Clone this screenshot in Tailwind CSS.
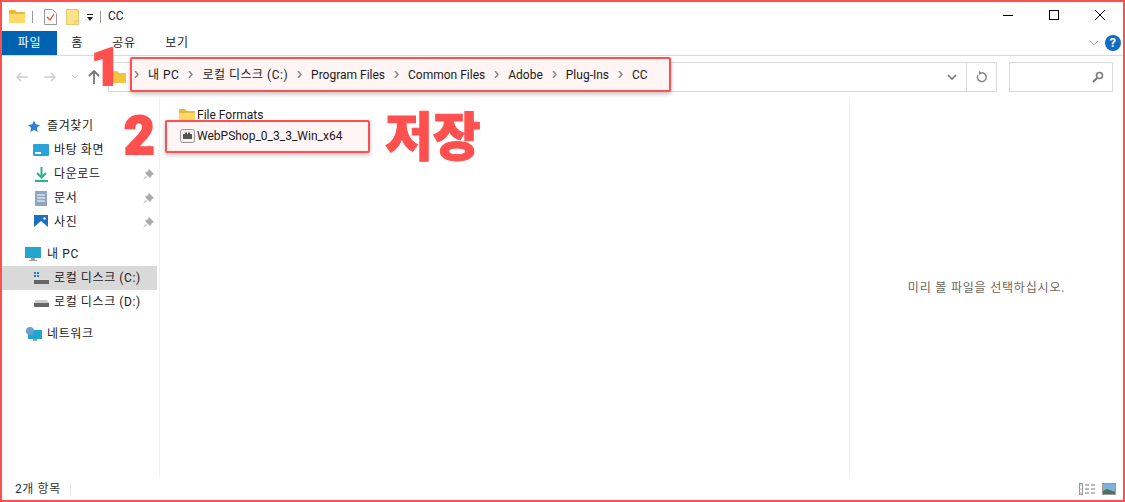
<!DOCTYPE html>
<html lang="ko">
<head>
  <meta charset="UTF-8">
  <title>CC</title>
  <script src="https://cdn.jsdelivr.net/npm/@tailwindcss/browser@4"></script>
</head>
<body class="bg-white">
  <div class="relative w-[1125px] h-[502px] overflow-hidden border-2 border-[#ff5050] flex flex-col bg-white text-[12px] text-[#1a1a1a] font-['Roboto','Noto_Sans_CJK_KR',sans-serif]">

    <!-- title bar -->
    <header class="h-[29px] shrink-0 flex items-center">
      <svg class="ml-[7px] w-[16px] h-[13px]" viewBox="0 0 16 13"><path d="M0 0h6l2 2h8v11H0z" fill="#e9b93f"/><path d="M0 4h16v9H0z" fill="#ffd966"/></svg>
      <div class="ml-[7px] w-px h-[12px] bg-[#999]"></div>
      <svg class="ml-[11px] w-[13px] h-[16px]" viewBox="0 0 13 16"><path d="M.5.5h8l4 4v11H.5z" fill="#fff" stroke="#999"/><path d="M3 8l3 3 4-6" fill="none" stroke="#e0562b" stroke-width="1.3"/></svg>
      <svg class="ml-[9px] w-[13px] h-[16px]" viewBox="0 0 13 16"><path d="M.5.5h12v15H.5z" fill="#ffe28a" stroke="#e3c66b"/><path d="M9 15v-3h3" fill="none" stroke="#e3c66b"/></svg>
      <svg class="ml-[7px] mt-[2px] w-[8px] h-[8px]" viewBox="0 0 8 8"><path d="M1 0h6v1H1zM1 3h6L4 7z" fill="#222"/></svg>
      <div class="ml-[6px] w-px h-[12px] bg-[#999]"></div>
      <span class="ml-[7px] -mt-[2px] text-[12px] text-[#222]">CC</span>
      <div class="ml-auto flex items-center">
        <svg class="w-[46px] h-[29px]" viewBox="0 0 46 29"><path d="M18 13.5h10" stroke="#000"/></svg>
        <svg class="w-[46px] h-[29px]" viewBox="0 0 46 29"><rect x="18.5" y="8.5" width="9" height="9" fill="none" stroke="#000"/></svg>
        <svg class="w-[46px] h-[29px]" viewBox="0 0 46 29"><path d="M18 8l10 10M28 8L18 18" stroke="#000"/></svg>
      </div>
    </header>

    <!-- ribbon tabs -->
    <nav class="h-[24px] shrink-0 flex items-center border-b border-[#dadada] box-content tracking-[0.6px]">
      <div class="w-[55px] h-[24px] flex items-center justify-center bg-[#0063b1] text-white">파일</div>
      <div class="w-[40px] text-center">홈</div>
      <div class="w-[54px] text-center">공유</div>
      <div class="w-[52px] text-center">보기</div>
      <svg class="ml-auto w-[10px] h-[6px]" viewBox="0 0 10 6"><path d="M1 1l4 4 4-4" fill="none" stroke="#aaa"/></svg>
      <div class="ml-[6px] mr-[2px] w-[16px] h-[16px] rounded-full bg-[#0f6cc4] text-white text-[13px] font-bold flex items-center justify-center">?</div>
    </nav>

    <!-- address row -->
    <div class="h-[42px] shrink-0 flex items-center">
      <svg class="ml-[13px] w-[13px] h-[12px]" viewBox="0 0 13 12"><path d="M13 6H2M6 2L2 6l4 4" fill="none" stroke="#d0d0d0" stroke-width="1.5"/></svg>
      <svg class="ml-[16px] w-[13px] h-[12px]" viewBox="0 0 13 12"><path d="M0 6h11M7 2l4 4-4 4" fill="none" stroke="#d0d0d0" stroke-width="1.5"/></svg>
      <svg class="ml-[15px] w-[6px] h-[4px]" viewBox="0 0 6 4"><path d="M0 0l3 3 3-3" fill="none" stroke="#ccc"/></svg>
      <svg class="ml-[10px] w-[12px] h-[14px]" viewBox="0 0 12 14"><path d="M6 14V1M1 6l5-5 5 5" fill="none" stroke="#777" stroke-width="1.8"/></svg>
      <div class="ml-[8px] w-[859px] h-[30px] flex items-center border border-[#d9d9d9]">
        <svg class="ml-[2px] w-[15px] h-[12px]" viewBox="0 0 15 12"><path d="M0 0h6l2 2h7v10H0z" fill="#f3c33f"/></svg>
        <svg class="ml-auto mr-[9px] w-[10px] h-[6px]" viewBox="0 0 10 6"><path d="M1 1l4 4 4-4" fill="none" stroke="#777" stroke-width="1.6"/></svg>
      </div>
      <div class="w-[30px] h-[30px] flex items-center justify-center border border-l-0 border-[#d9d9d9]">
        <svg class="w-[11px] h-[12px]" viewBox="0 0 11 12"><path d="M6 1.8a4.4 4.4 0 1 1-4 2.2" fill="none" stroke="#888" stroke-width="1.5"/><path d="M3 0l4 2-4 2z" fill="#888"/></svg>
      </div>
      <div class="ml-[12px] w-[104px] h-[30px] flex items-center justify-end pr-[8px] border border-[#d9d9d9]">
        <svg class="w-[12px] h-[12px]" viewBox="0 0 12 12"><circle cx="7.5" cy="4.5" r="3" fill="none" stroke="#777" stroke-width="1.5"/><path d="M5 7l-4 4" stroke="#777" stroke-width="2"/></svg>
      </div>
    </div>

    <!-- body -->
    <div class="flex-1 flex min-h-0">
      <aside class="w-[158px] shrink-0 border-r border-[#f0f0f0] pr-[2px] pt-[16px] tracking-[0.6px]">
        <div class="h-[24px] pl-[25px] flex items-center">
          <svg class="w-[14px] h-[13px]" viewBox="0 0 24 24"><path d="M12 1l3.4 7 7.6 1-5.500 5.300 1.300 7.700-6.800-3.600L5.200 22l1.300-7.700L1 9l7.600-1z" fill="#2f7fd3"/></svg>
          <span class="ml-[6px]">즐겨찾기</span>
        </div>
        <div class="h-[24px] pl-[31px] pr-[3px] flex items-center">
          <svg class="w-[16px] h-[12px]" viewBox="0 0 16 12"><rect width="16" height="12" rx="1" fill="#29a3d8"/><rect x="2" y="8" width="6" height="2" fill="#fff"/></svg>
          <span class="ml-[5px]">바탕 화면</span>
          <svg class="ml-auto w-[11px] h-[11px]" viewBox="0 0 11 11"><path d="M6 0l5 5-2 1-2 3-5-5 3-2zM3 7l-3 4 4-3z" fill="#aaa"/></svg>
        </div>
        <div class="h-[24px] pl-[33px] pr-[3px] flex items-center">
          <svg class="w-[13px] h-[15px]" viewBox="0 0 13 15"><path d="M6.500 0v10M2 6l4.500 4.500L11 6" fill="none" stroke="#2bb38a" stroke-width="2"/><path d="M0 14h13" stroke="#2bb38a" stroke-width="2"/></svg>
          <span class="ml-[6px]">다운로드</span>
          <svg class="ml-auto w-[11px] h-[11px]" viewBox="0 0 11 11"><path d="M6 0l5 5-2 1-2 3-5-5 3-2zM3 7l-3 4 4-3z" fill="#aaa"/></svg>
        </div>
        <div class="h-[24px] pl-[33px] pr-[3px] flex items-center">
          <svg class="w-[12px] h-[15px]" viewBox="0 0 12 15"><rect width="12" height="15" fill="#8fa6c0"/><path d="M2 4h8M2 7h8M2 10h8" stroke="#fff"/></svg>
          <span class="ml-[7px]">문서</span>
          <svg class="ml-auto w-[11px] h-[11px]" viewBox="0 0 11 11"><path d="M6 0l5 5-2 1-2 3-5-5 3-2zM3 7l-3 4 4-3z" fill="#aaa"/></svg>
        </div>
        <div class="h-[24px] pl-[32px] pr-[3px] flex items-center">
          <svg class="w-[14px] h-[14px]" viewBox="0 0 14 14"><rect width="14" height="14" fill="#1d6fc0"/><path d="M0 14V12l7-6 7 6v2z" fill="#fff"/><circle cx="10.500" cy="3.500" r="1.200" fill="#fff"/></svg>
          <span class="ml-[6px]">사진</span>
          <svg class="ml-auto w-[11px] h-[11px]" viewBox="0 0 11 11"><path d="M6 0l5 5-2 1-2 3-5-5 3-2zM3 7l-3 4 4-3z" fill="#aaa"/></svg>
        </div>
        <div class="mt-[8px] h-[24px] pl-[23px] flex items-center">
          <svg class="w-[16px] h-[15px]" viewBox="0 0 16 15"><rect width="16" height="11" fill="#22a5cf"/><path d="M6 11h4v2h2v1H4v-1h2z" fill="#8fa6b5"/></svg>
          <span class="ml-[6px]">내 PC</span>
        </div>
        <div class="h-[24px] pl-[32px] flex items-center bg-[#d9d9d9]">
          <svg class="w-[15px] h-[12px]" viewBox="0 0 15 12"><path d="M0 0h2v2H0zM3 0h2v2H3zM0 3h2v2H0zM3 3h2v2H3z" fill="#1d7fd0"/><path d="M2 6h11l2 2H0z" fill="#ddd"/><rect y="8" width="15" height="4" fill="#666"/></svg>
          <span class="ml-[5px]">로컬 디스크 (C:)</span>
        </div>
        <div class="h-[24px] pl-[32px] flex items-center">
          <svg class="w-[15px] h-[12px]" viewBox="0 0 15 12"><path d="M2 4h11l2 3H0z" fill="#ccc"/><rect y="7" width="15" height="4" fill="#666"/></svg>
          <span class="ml-[5px]">로컬 디스크 (D:)</span>
        </div>
        <div class="mt-[8px] h-[24px] pl-[23px] flex items-center">
          <svg class="w-[17px] h-[15px]" viewBox="0 0 17 15"><rect x="3" y="3" width="14" height="9" fill="#22a5cf"/><path d="M8 12h4v2H8z" fill="#8fa6b5"/><circle cx="5" cy="4" r="4" fill="#6b9fd0"/></svg>
          <span class="ml-[5px]">네트워크</span>
        </div>
      </aside>

      <main class="flex-1 pl-[19px] pt-[6px]">
        <div class="h-[22px] flex items-center gap-[2px]">
          <svg class="w-[16px] h-[13px]" viewBox="0 0 16 13"><path d="M0 0h6l2 2h8v11H0z" fill="#e9b93f"/><path d="M0 4h16v9H0z" fill="#ffd966"/></svg>
          <span>File Formats</span>
        </div>
      </main>

      <section class="w-[274px] shrink-0 border-l border-[#f0f0f0] flex items-center justify-center text-[#6b6459] tracking-[0.8px]">
        미리 볼 파일을 선택하십시오.
      </section>
    </div>

    <!-- status bar -->
    <footer class="h-[23px] shrink-0 flex items-center pl-[13px]">
      <span class="text-[#333] tracking-[0.6px]">2개 항목</span>
      <div class="ml-[9px] w-px h-[12px] bg-[#e5e5e5]"></div>
      <svg class="ml-auto w-[16px] h-[12px]" viewBox="0 0 16 12"><rect x=".5" y=".5" width="3" height="11" fill="none" stroke="#999"/><path d="M1.500 2h1" stroke="#3a8f5a"/><path d="M1.500 6h1" stroke="#2f7fd3"/><path d="M1.500 10h1" stroke="#d33"/><path d="M6 2h4M12 2h4M6 6h4M12 6h4M6 10h4M12 10h4" stroke="#777"/></svg>
      <svg class="ml-[7px] mr-[7px] w-[14px] h-[12px]" viewBox="0 0 14 12"><rect x=".5" y=".5" width="13" height="11" fill="#7fb2d8" stroke="#999"/><path d="M1 8l4-2 8 3v2H1z" fill="#4f6f5a"/></svg>
    </footer>

    <!-- annotations -->
    <div class="absolute left-[128px] top-[55px] w-[541px] h-[35px] border-2 border-[#ff5050] rounded-[2px] bg-[#fff5f4] shadow-[0_2px_4px_rgba(0,0,0,0.25)] flex items-center pl-[2px] gap-[9px]">
      <svg class="w-[5px] h-[7px]" viewBox="0 0 5 7"><path d="M1 0l3 3.500-3 3.500" fill="none" stroke="#888" stroke-width="1.5"/></svg><span class="tracking-[0.5px]">내 PC</span>
      <svg class="w-[5px] h-[7px]" viewBox="0 0 5 7"><path d="M1 0l3 3.500-3 3.500" fill="none" stroke="#888" stroke-width="1.5"/></svg><span class="tracking-[0.5px]">로컬 디스크 (C:)</span>
      <svg class="w-[5px] h-[7px]" viewBox="0 0 5 7"><path d="M1 0l3 3.500-3 3.500" fill="none" stroke="#888" stroke-width="1.5"/></svg><span>Program Files</span>
      <svg class="w-[5px] h-[7px]" viewBox="0 0 5 7"><path d="M1 0l3 3.500-3 3.500" fill="none" stroke="#888" stroke-width="1.5"/></svg><span>Common Files</span>
      <svg class="w-[5px] h-[7px]" viewBox="0 0 5 7"><path d="M1 0l3 3.500-3 3.500" fill="none" stroke="#888" stroke-width="1.5"/></svg><span>Adobe</span>
      <svg class="w-[5px] h-[7px]" viewBox="0 0 5 7"><path d="M1 0l3 3.500-3 3.500" fill="none" stroke="#888" stroke-width="1.5"/></svg><span>Plug-Ins</span>
      <svg class="w-[5px] h-[7px]" viewBox="0 0 5 7"><path d="M1 0l3 3.500-3 3.500" fill="none" stroke="#888" stroke-width="1.5"/></svg><span>CC</span>
    </div>
    <div class="absolute left-[163px] top-[118px] w-[205px] h-[33px] border-2 border-[#ff5050] rounded-[2px] bg-[#fff5f4] shadow-[0_2px_4px_rgba(0,0,0,0.25)] flex items-center pl-[13px] gap-[2px] pb-[2px]">
      <svg class="w-[15px] h-[14px]" viewBox="0 0 15 14"><rect x=".5" y=".5" width="14" height="13" rx="2" fill="#f7f0ee" stroke="#999"/><path d="M3 5h2V3.500h2V5h1V3.500h2V5h2v5H3z" fill="#555"/></svg>
      <span>WebPShop_0_3_3_Win_x64</span>
    </div>
    <span class="absolute left-[89px] top-[48px] text-[52px] leading-[36px] font-black text-[#ff5050] [-webkit-text-stroke:2px_#ff5050]">1</span>
    <span class="absolute left-[122px] top-[102px] text-[53px] leading-[64px] font-black text-[#ff5050] [-webkit-text-stroke:2px_#ff5050]">2</span>
    <span class="absolute left-[383px] top-[105px] text-[52px] leading-[64px] font-black text-[#ff5050] [-webkit-text-stroke:1px_#ff5050]">저장</span>
  </div>
</body>
</html>
